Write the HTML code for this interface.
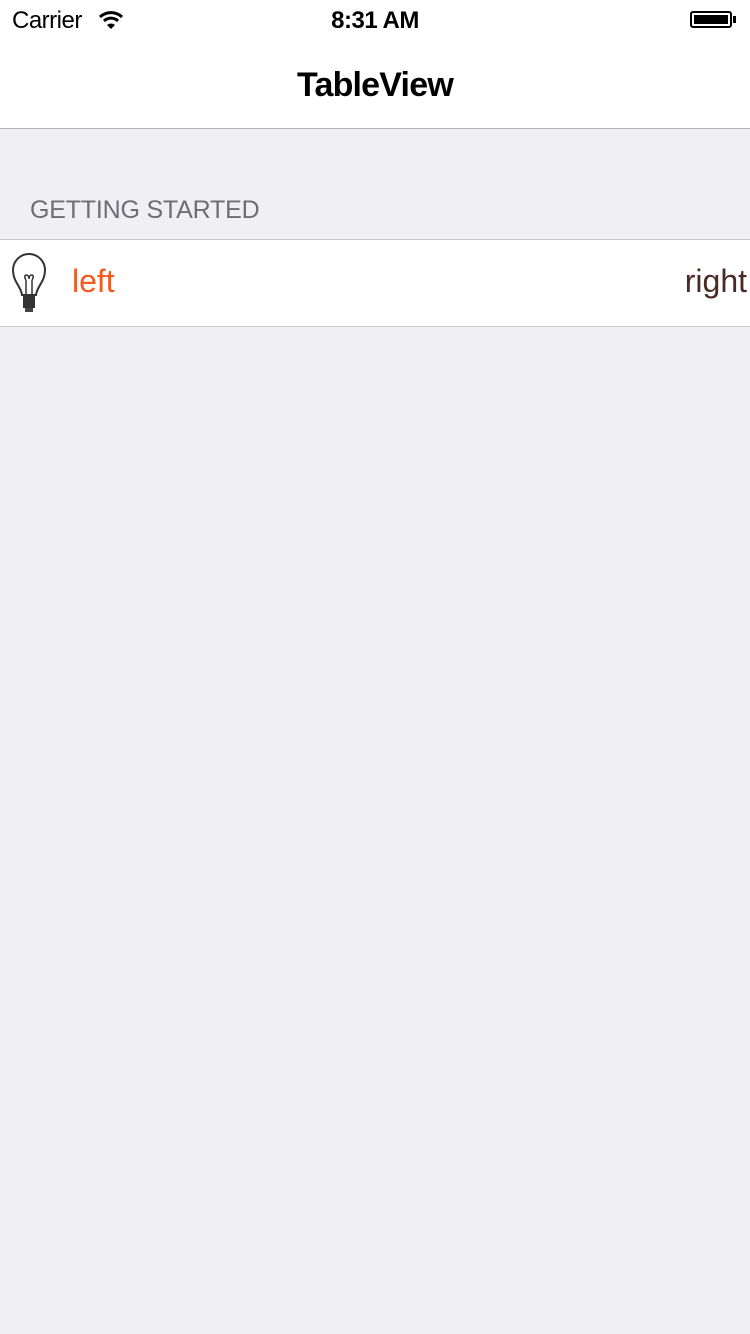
<!DOCTYPE html>
<html><head><style>
body{margin:0;width:750px;height:1334px;background:#efeff4;font-family:"Liberation Sans",sans-serif;position:relative;overflow:hidden}
.a{position:absolute}
</style></head><body>
<div class="a" style="left:0;top:0;width:750px;height:128px;background:#fff;border-bottom:1px solid #b2b2b2"></div>
<div class="a" style="left:12px;top:7px;font-size:24px;letter-spacing:-0.5px">Carrier</div>
<svg class="a" style="left:98px;top:10px" width="26" height="20" viewBox="0 0 26 20"><path d="M2 7a16 16 0 0 1 22 0" stroke="#000" stroke-width="3" fill="none"/><path d="M6 11a10 10 0 0 1 14 0" stroke="#000" stroke-width="3" fill="none"/><path d="M13 19l-4-4a6 6 0 0 1 8 0z"/></svg>
<div class="a" style="left:0;width:750px;top:7px;text-align:center;font-size:24px;font-weight:bold;letter-spacing:-0.5px">8:31 AM</div>
<div class="a" style="left:690px;top:11px;width:42px;height:17px;border:2px solid #000;border-radius:3px;box-sizing:border-box;padding:2px"><div style="background:#000;width:100%;height:100%"></div></div>
<div class="a" style="left:733px;top:16px;width:3px;height:7px;background:#000"></div>
<div class="a" style="left:0;width:750px;top:66px;text-align:center;font-size:34px;font-weight:bold;letter-spacing:-0.8px">TableView</div>
<div class="a" style="left:30px;top:196px;font-size:25px;color:#6d6d72;letter-spacing:-0.2px">GETTING STARTED</div>
<div class="a" style="left:0;top:239px;width:750px;height:86px;background:#fff;border-top:1px solid #c8c7cc;border-bottom:1px solid #c8c7cc"></div>
<svg class="a" style="left:10px;top:252px" width="38" height="62" viewBox="0 0 38 62"><path d="M12 43C11 34 3 30 3 18a16 16 0 0 1 32 0c0 12-8 16-9 25z" fill="none" stroke="#333" stroke-width="2"/><path d="M16 43V28M22 43V28M16 28c-4-6 3-7 3-1c0-6 7-5 3 1" fill="none" stroke="#333" stroke-width="1.5"/><rect x="13" y="44" width="12" height="12" fill="#333"/><rect x="15" y="56" width="8" height="4" fill="#444"/></svg>
<div class="a" style="left:72px;top:263px;font-size:32px;color:#f55a1f">left</div>
<div class="a" style="right:3px;top:263px;font-size:32px;color:#4a2a24">right</div>
</body></html>
